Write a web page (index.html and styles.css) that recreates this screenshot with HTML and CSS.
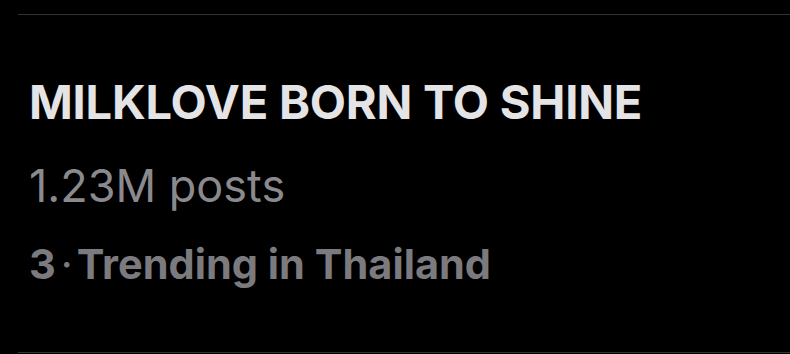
FILE: index.html
```html
<!DOCTYPE html>
<html>
<head>
<meta charset="utf-8">
<link rel="stylesheet" href="styles.css">
</head>
<body>
<div class="trend">
  <div class="title">MILKLOVE BORN TO SHINE</div>
  <div class="posts">1.23M posts</div>
  <div class="meta">3<span class="dot">·</span>Trending in Thailand</div>
</div>
</body>
</html>
```
FILE: styles.css
```css
html, body {
  margin: 0;
  padding: 0;
  background: #000;
  width: 790px;
  height: 354px;
  overflow: hidden;
}
.trend {
  margin-top: 14px;
  margin-left: 18px;
  height: 337px;
  border-top: 1px solid #2f3336;
  border-bottom: 1px solid #2f3336;
  padding-left: 11px;
  font-family: Inter, "Liberation Sans", sans-serif;
}
.title {
  margin-top: 61px;
  font-size: 47px;
  font-weight: 700;
  color: #e4e4e6;
  line-height: 52px;
  letter-spacing: -0.2px;
}
.posts {
  margin-top: 32px;
  font-size: 45px;
  font-weight: 400;
  color: #8a8a8e;
  line-height: 52px;
}
.meta {
  margin-top: 26px;
  font-size: 41.5px;
  font-weight: 700;
  color: #7b7b7f;
  line-height: 52px;
}
.dot {
  display: inline-block;
  margin: 0 4px 0 5px;
  font-weight: 400;
}
```
